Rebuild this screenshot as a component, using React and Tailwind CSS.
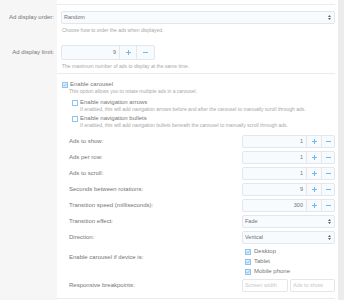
import React from "react";

function Plus() {
  return (
    <svg width="5" height="5" viewBox="0 0 5 5">
      <path d="M2.5 0V5M0 2.5H5" stroke="#72b6ea" strokeWidth="1" />
    </svg>
  );
}
function Minus() {
  return (
    <svg width="5" height="5" viewBox="0 0 5 5">
      <path d="M0 2.5H5" stroke="#72b6ea" strokeWidth="1" />
    </svg>
  );
}
function Arrow() {
  return (
    <svg width="3" height="5" viewBox="0 0 3 5">
      <path d="M0 2L1.5 0L3 2Z M0 3L1.5 5L3 3Z" fill="#606060" />
    </svg>
  );
}

function Num({ value, h = "h-[13px]", plusW = "w-[15px]", minusW = "w-[13px]" }) {
  return (
    <div className={`flex ${h} border border-[#e1e7ec] rounded-[2px] bg-[#f8fbfd] text-[#707070] text-[5.5px]`}>
      <div className="flex-1 flex items-center justify-end pr-[3px]">{value}</div>
      <div className={`${plusW} border-l border-[#e1e7ec] flex items-center justify-center`}>
        <Plus />
      </div>
      <div className={`${minusW} border-l border-[#e1e7ec] flex items-center justify-center`}>
        <Minus />
      </div>
    </div>
  );
}

function Select({ value }) {
  return (
    <div className="flex h-[13px] items-center justify-between border border-[#e1e7ec] rounded-[2px] bg-[#f8fbfd] pl-[2px] pr-[3px] text-[5.5px] text-[#707070]">
      <span>{value}</span>
      <Arrow />
    </div>
  );
}

function Check({ checked }) {
  return (
    <div
      className={`w-[6px] h-[6px] border border-[#8ec5ee] shrink-0 flex items-center justify-center ${
        checked ? "bg-[#dcedfa]" : "bg-white"
      }`}
    >
      {checked && (
        <svg width="4" height="4" viewBox="0 0 4 4">
          <path d="M0.5 2L1.6 3.1L3.6 0.8" stroke="#6aaee4" strokeWidth="0.7" fill="none" />
        </svg>
      )}
    </div>
  );
}

function SubRow({ label, children, mt = "mt-[3px]" }) {
  return (
    <div className={`flex items-center h-[13px] ${mt}`}>
      <div className="flex-1 text-[6px] text-[#757575]">{label}</div>
      <div className="w-[93px]">{children}</div>
    </div>
  );
}

export default function App() {
  return (
    <div className="w-[344px] h-[300px] flex bg-[#f5f5f5] font-['Liberation_Sans',Arial,sans-serif] overflow-hidden">
      <div className="w-[57px] shrink-0 bg-[#f6f6f6]">
        <div className="h-[11px]" />
        <div className="h-[13px] flex items-center justify-end pr-[3px] text-[6px] text-[#757575]">
          Ad display order:
        </div>
        <div className="h-[21px]" />
        <div className="h-[15px] flex items-center justify-end pr-[3px] text-[6px] text-[#757575]">
          Ad display limit:
        </div>
      </div>
      <div className="flex-1 bg-white pl-[4px] pr-[3px]">
        <div className="h-[5px] border-b border-[#ebebeb] -ml-[4px]" />
        <div className="mt-[6px]">
          <Select value="Random" />
        </div>
        <div className="mt-[3px] h-[6px] leading-[6px] text-[5px] text-[#a8a8a8] pl-[1px]">
          Choose how to order the ads when displayed.
        </div>
        <div className="mt-[12px] w-[94px]">
          <Num value="9" h="h-[15px]" plusW="w-[17px]" minusW="w-[18px]" />
        </div>
        <div className="mt-[3px] h-[6px] leading-[6px] text-[5px] text-[#a8a8a8] pl-[1px]">
          The maximum number of ads to display at the same time.
        </div>
        <div className="h-[5px] border-b border-[#ebebeb] -ml-[4px]" />

        <div className="mt-[7px] flex items-center gap-[2px] h-[7px] pl-[1px]">
          <Check checked />
          <span className="text-[6px] text-[#757575] leading-[7px]">Enable carousel</span>
        </div>
        <div className="h-[6px] leading-[6px] text-[5px] text-[#a8a8a8] pl-[8px]">
          This option allows you to rotate multiple ads in a carousel.
        </div>
        <div className="mt-[5px] flex items-center gap-[2px] h-[7px] pl-[11px]">
          <Check />
          <span className="text-[6px] text-[#757575] leading-[7px]">Enable navigation arrows</span>
        </div>
        <div className="h-[6px] leading-[6px] text-[5px] text-[#a8a8a8] pl-[19px]">
          If enabled, this will add navigation arrows before and after the carousel to manually scroll through ads.
        </div>
        <div className="mt-[3px] flex items-center gap-[2px] h-[7px] pl-[11px]">
          <Check />
          <span className="text-[6px] text-[#757575] leading-[7px]">Enable navigation bullets</span>
        </div>
        <div className="h-[6px] leading-[6px] text-[5px] text-[#a8a8a8] pl-[19px]">
          If enabled, this will add navigation bullets beneath the carousel to manually scroll through ads.
        </div>

        <div className="pl-[8px]">
          <SubRow label="Ads to show:" mt="mt-[7px]">
            <Num value="1" />
          </SubRow>
          <SubRow label="Ads per row:">
            <Num value="1" />
          </SubRow>
          <SubRow label="Ads to scroll:">
            <Num value="1" />
          </SubRow>
          <SubRow label="Seconds between rotations:">
            <Num value="9" />
          </SubRow>
          <SubRow label="Transition speed (milliseconds):">
            <Num value="300" />
          </SubRow>
          <SubRow label="Transition effect:">
            <Select value="Fade" />
          </SubRow>
          <SubRow label="Direction:">
            <Select value="Vertical" />
          </SubRow>
          <div className="flex mt-[4px]">
            <div className="flex-1 text-[6px] text-[#757575] pt-[6px] leading-[7px]">
              Enable carousel if device is:
            </div>
            <div className="w-[93px] pl-[3px] flex flex-col gap-[3px]">
              {["Desktop", "Tablet", "Mobile phone"].map((t) => (
                <div key={t} className="flex items-center gap-[3px] h-[7px]">
                  <Check checked />
                  <span className="text-[6px] text-[#757575] leading-[7px]">{t}</span>
                </div>
              ))}
            </div>
          </div>
          <div className="flex items-center h-[13px] mt-[4px]">
            <div className="flex-1 text-[6px] text-[#757575]">Responsive breakpoints:</div>
            <div className="w-[93px] flex gap-[2px]">
              <div className="w-[46px] h-[13px] border border-[#e1e7ec] rounded-[2px] flex items-center pl-[2px] text-[5.5px] text-[#c8c8c8]">
                Screen width
              </div>
              <div className="flex-1 h-[13px] border border-[#e1e7ec] rounded-[2px] flex items-center pl-[2px] text-[5.5px] text-[#c8c8c8]">
                Ads to show
              </div>
            </div>
          </div>
        </div>
        <div className="h-[7px] border-b border-[#ebebeb] -ml-[4px]" />
      </div>
      <div className="w-[6px] shrink-0 bg-[#ececec]" />
    </div>
  );
}
